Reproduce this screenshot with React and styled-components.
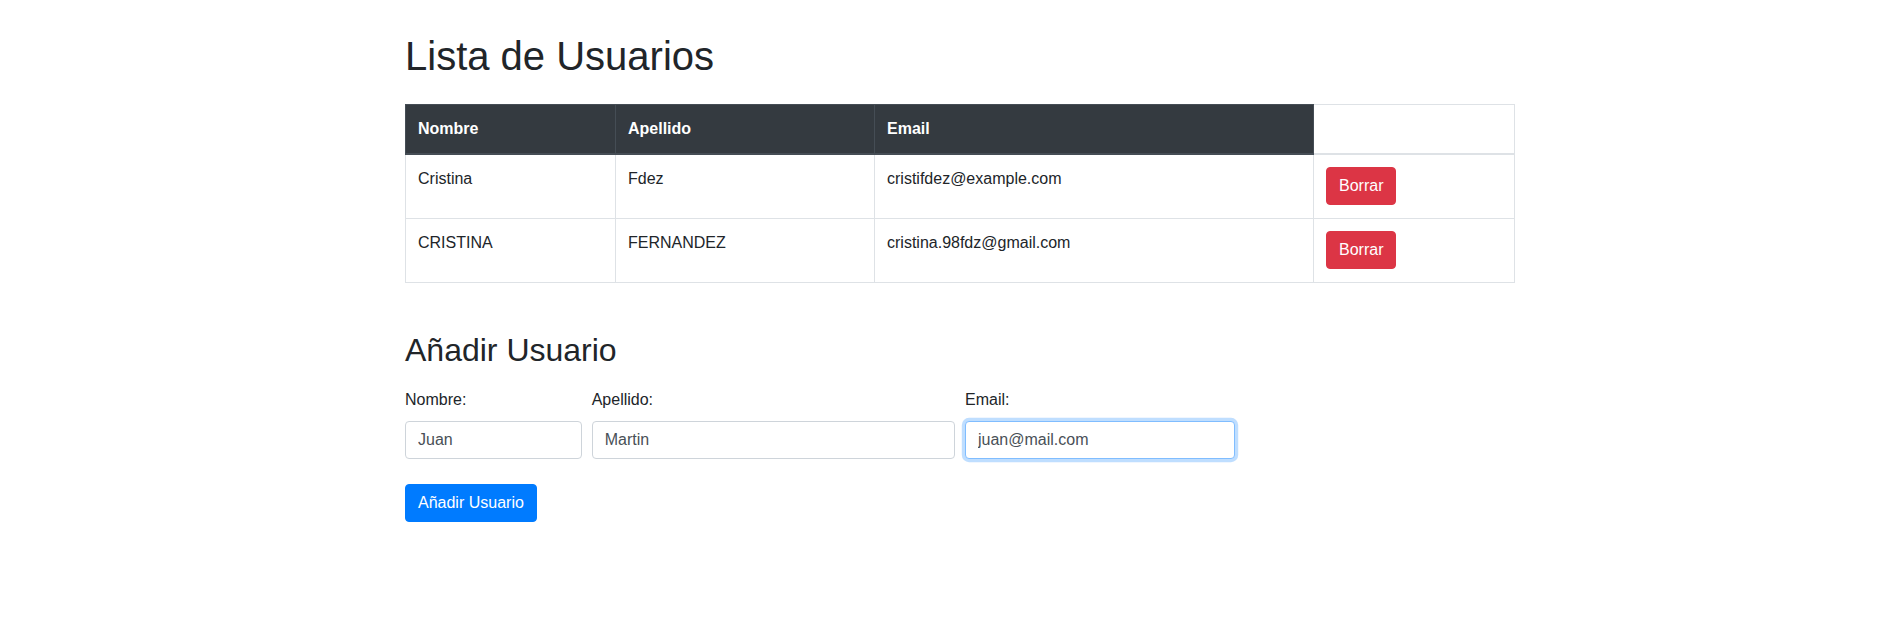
import React, { useState } from 'react';
import styled, { createGlobalStyle } from 'styled-components';

const GlobalStyle = createGlobalStyle`
  body {
    margin: 0;
    background: #fff;
    color: #212529;
    font-family: "Liberation Sans", Arial, sans-serif;
    font-size: 16px;
    line-height: 1.5;
  }
  * {
    box-sizing: border-box;
  }
`;

/**
 * Styled Components
 */
const Page = styled.div`
  padding: 32px 0 40px 405px;
`;

const Container = styled.div`
  width: 1110px;
`;

const Title = styled.h1`
  margin: 0 0 24px;
  font-size: 40px;
  font-weight: 500;
  line-height: 1.2;
`;

const SubTitle = styled.h2`
  margin: 48px 0 19px;
  font-size: 32px;
  font-weight: 500;
  line-height: 1.2;
`;

const Table = styled.table`
  width: 1110px;
  border-collapse: collapse;
  border: 1px solid #dee2e6;
  color: #212529;
`;

const Th = styled.th`
  width: ${props => props.w || 'auto'};
  padding: 12px;
  text-align: left;
  vertical-align: bottom;
  font-weight: 700;
  color: ${props => (props.dark ? '#fff' : '#212529')};
  background: ${props => (props.dark ? '#343a40' : '#fff')};
  border: 1px solid ${props => (props.dark ? '#454d55' : '#dee2e6')};
  border-bottom-width: 2px;
`;

const Td = styled.td`
  padding: 12px 12px 13px;
  vertical-align: top;
  border: 1px solid #dee2e6;
`;

const Button = styled.button`
  display: inline-block;
  padding: 6px 12px;
  font-family: inherit;
  font-size: 16px;
  line-height: 1.5;
  color: #fff;
  background: ${props => (props.variant === 'danger' ? '#dc3545' : '#007bff')};
  border: 1px solid ${props => (props.variant === 'danger' ? '#dc3545' : '#007bff')};
  border-radius: 4px;
  cursor: pointer;
`;

const FormRow = styled.div`
  display: grid;
  grid-template-columns: 176.67px 363.33px 270px;
  column-gap: 10px;
  margin-bottom: 25px;
`;

const Field = styled.div`
  display: flex;
  flex-direction: column;
`;

const Label = styled.label`
  margin-bottom: 9px;
  line-height: 24px;
`;

const Input = styled.input`
  height: 38px;
  padding: 6px 12px;
  font-family: inherit;
  font-size: 16px;
  line-height: 1.5;
  color: #495057;
  background: #fff;
  border: 1px solid ${props => (props.focused ? '#80bdff' : '#ced4da')};
  border-radius: 4px;
  outline: none;
  box-shadow: ${props => (props.focused ? '0 0 0 3.2px rgba(0, 123, 255, 0.25)' : 'none')};
`;

const initialUsers = [
  { id: 1, nombre: 'Cristina', apellido: 'Fdez', email: 'cristifdez@example.com' },
  { id: 2, nombre: 'CRISTINA', apellido: 'FERNANDEZ', email: 'cristina.98fdz@gmail.com' },
];

/**
 * Component
 */
const App = () => {
  const [users, setUsers] = useState(initialUsers);
  const [form, setForm] = useState({ nombre: 'Juan', apellido: 'Martin', email: 'juan@mail.com' });

  const onChange = e => setForm({ ...form, [e.target.name]: e.target.value });

  const removeUser = id => setUsers(users.filter(u => u.id !== id));

  return (
    <Page>
      <GlobalStyle />
      <Container>
        <Title>Lista de Usuarios</Title>
        <Table>
          <thead>
            <tr>
              <Th dark w="210px">Nombre</Th>
              <Th dark w="259px">Apellido</Th>
              <Th dark w="439px">Email</Th>
              <Th />
            </tr>
          </thead>
          <tbody>
            {users.map(u => (
              <tr key={u.id}>
                <Td>{u.nombre}</Td>
                <Td>{u.apellido}</Td>
                <Td>{u.email}</Td>
                <Td>
                  <Button variant="danger" onClick={() => removeUser(u.id)}>
                    Borrar
                  </Button>
                </Td>
              </tr>
            ))}
          </tbody>
        </Table>

        <SubTitle>Añadir Usuario</SubTitle>
        <form onSubmit={e => e.preventDefault()}>
          <FormRow>
            <Field>
              <Label>Nombre:</Label>
              <Input name="nombre" value={form.nombre} onChange={onChange} />
            </Field>
            <Field>
              <Label>Apellido:</Label>
              <Input name="apellido" value={form.apellido} onChange={onChange} />
            </Field>
            <Field>
              <Label>Email:</Label>
              <Input focused name="email" value={form.email} onChange={onChange} />
            </Field>
          </FormRow>
          <Button type="submit">Añadir Usuario</Button>
        </form>
      </Container>
    </Page>
  );
};

export default App;
